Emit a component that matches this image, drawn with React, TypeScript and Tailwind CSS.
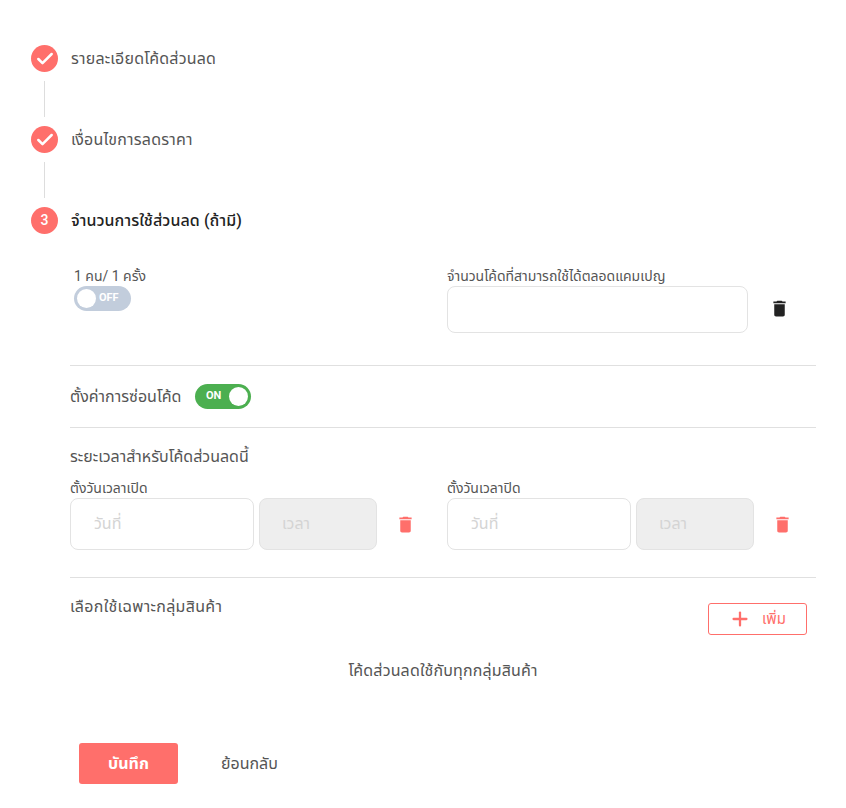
import { Check, Plus } from 'lucide-react'

const coral = '#ff6f6b'

function TrashIcon({ className }: { className: string }) {
  return (
    <svg viewBox="0 0 24 24" fill="currentColor" className={className}>
      <path d="M6 19c0 1.1.9 2 2 2h8c1.1 0 2-.9 2-2V7H6v12zM19 4h-3.5l-1-1h-5l-1 1H5v2h14V4z" />
    </svg>
  )
}

function StepCircle({ children }: { children: React.ReactNode }) {
  return (
    <div className="flex h-[27px] w-[27px] shrink-0 items-center justify-center rounded-full bg-[#ff6f6b] text-[14px] font-medium text-white">
      {children}
    </div>
  )
}

function Step({ label, done, last }: { label: string; done?: boolean; last?: boolean }) {
  return (
    <div>
      <div className="flex h-[27px] items-center gap-[13px]">
        <StepCircle>{done ? <Check className="h-[20px] w-[20px]" strokeWidth={3} /> : '3'}</StepCircle>
        <span className={done ? 'text-[16px] tracking-[0.2px] text-[#555]' : 'text-[16px] font-medium tracking-[0.1px] text-[#222]'}>{label}</span>
      </div>
      {!last && <div className="my-[9px] ml-[13px] h-[36px] w-px bg-[#ddd]" />}
    </div>
  )
}

function DateTime({ label }: { label: string }) {
  return (
    <div className="w-[377px] shrink-0">
      <div className="h-[20px] text-[14px] leading-[20px] text-[#555]">{label}</div>
      <div className="flex items-center">
        <div className="flex h-[52px] w-[184px] items-center rounded-lg border border-[#e3e3e3] pl-[23px] text-[16px] text-[#d4d4d4]">วันที่</div>
        <div className="ml-[5px] flex h-[52px] w-[118px] items-center rounded-lg border border-[#e3e3e3] bg-[#eeeeee] pl-[22px] text-[16px] text-[#d4d4d4]">เวลา</div>
        <TrashIcon className="ml-[18px] h-[21px] w-[21px] text-[#ff6f6b]" />
      </div>
    </div>
  )
}

export default function App() {
  return (
    <div className="h-[808px] w-[846px] overflow-hidden bg-white pl-[31px] pt-[45px] font-['Roboto','Noto_Sans','Noto_Sans_Thai',sans-serif]">
      <Step label="รายละเอียดโค้ดส่วนลด" done />
      <Step label="เงื่อนไขการลดราคา" done />
      <Step label="จำนวนการใช้ส่วนลด (ถ้ามี)" last />

      <div className="ml-[39px] w-[746px]">
        {/* limits */}
        <div className="flex h-[132px] border-b border-[#e0e0e0] pt-[32px]">
          <div className="w-[377px] shrink-0 pl-[4px]">
            <div className="h-[20px] text-[14px] leading-[20px] text-[#555]">1 คน/ 1 ครั้ง</div>
            <div className="flex h-[25px] w-[57px] items-center rounded-full bg-[#c2cddc] pl-[3px]">
              <div className="h-[19px] w-[19px] rounded-full bg-white" />
              <span className="ml-[3px] text-[11px] font-bold text-white">OFF</span>
            </div>
          </div>
          <div>
            <div className="h-[20px] text-[14px] leading-[20px] text-[#555]">จำนวนโค้ดที่สามารถใช้ได้ตลอดแคมเปญ</div>
            <div className="flex items-center">
              <div className="h-[47px] w-[301px] rounded-lg border border-[#e3e3e3]" />
              <TrashIcon className="-mt-[3px] ml-[21px] h-[21px] w-[21px] text-[#222]" />
            </div>
          </div>
        </div>

        {/* hide code */}
        <div className="flex h-[62px] items-center border-b border-[#e0e0e0]">
          <span className="w-[112px] text-[16px] text-[#555]">ตั้งค่าการซ่อนโค้ด</span>
          <div className="ml-[13px] flex h-[25px] w-[56px] items-center justify-between rounded-full bg-[#4caf50] pl-[11px] pr-[3px]">
            <span className="text-[11px] font-bold text-white">ON</span>
            <div className="h-[19px] w-[19px] rounded-full bg-white" />
          </div>
        </div>

        {/* period */}
        <div className="h-[150px] border-b border-[#e0e0e0] pt-[18px]">
          <div className="h-[22px] text-[16px] leading-[22px] text-[#555]">ระยะเวลาสำหรับโค้ดส่วนลดนี้</div>
          <div className="mt-[10px] flex">
            <DateTime label="ตั้งวันเวลาเปิด" />
            <DateTime label="ตั้งวันเวลาปิด" />
          </div>
        </div>

        {/* product group */}
        <div className="flex items-start justify-between pr-[9px] pt-[18px]">
          <span className="text-[16px] leading-[22px] tracking-[0.3px] text-[#555]">เลือกใช้เฉพาะกลุ่มสินค้า</span>
          <div className="mt-[7px] flex h-[32px] w-[99px] items-center justify-center gap-[11px] rounded-[3px] border border-[#ff6f6b] text-[15px] text-[#ff6f6b]">
            <Plus className="h-[22px] w-[22px]" color={coral} strokeWidth={2.5} />
            เพิ่ม
          </div>
        </div>
        <div className="mt-[25px] text-center text-[16px] leading-[22px] tracking-[0.15px] text-[#555]">โค้ดส่วนลดใช้กับทุกกลุ่มสินค้า</div>
      </div>

      <div className="ml-[48px] mt-[61px] flex items-center">
        <div className="flex h-[41px] w-[99px] items-center justify-center rounded-[3px] bg-[#ff6f6b] text-[16px] font-bold text-white">บันทึก</div>
        <span className="ml-[43px] text-[16px] text-[#555]">ย้อนกลับ</span>
      </div>
    </div>
  )
}
